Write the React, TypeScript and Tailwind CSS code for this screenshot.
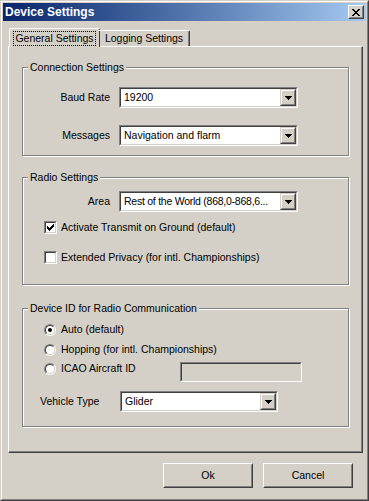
import React from 'react';

const Arrow = () => (
    <svg width="7" height="4" viewBox="0 0 7 4" shapeRendering="crispEdges">
        <path d="M0 0h7v1H0zM1 1h5v1H1zM2 2h3v1H2zM3 3h1v1H3z" fill="#000" />
    </svg>
);

const DropButton = () => (
    <div className="w-[16px] h-full border border-t-[#D4D0C8] border-l-[#D4D0C8] border-r-[#404040] border-b-[#404040] bg-[#D4D0C8]">
        <div className="h-full flex items-center justify-center border border-t-white border-l-white border-r-[#808080] border-b-[#808080]">
            <Arrow />
        </div>
    </div>
);

const Combo = ({ value, width, tight }: { value: string; width: string; tight?: boolean }) => (
    <div className={`${width} h-[21px] border border-t-[#808080] border-l-[#808080] border-r-white border-b-white`}>
        <div className="h-full flex bg-white border border-t-[#404040] border-l-[#404040] border-r-[#D4D0C8] border-b-[#D4D0C8]">
            <div className={`flex-1 min-w-0 pl-[3px] leading-[17px] whitespace-nowrap ${tight ? 'tracking-[-0.25px]' : ''}`}>{value}</div>
            <DropButton />
        </div>
    </div>
);

const CheckBox = ({ checked, label }: { checked?: boolean; label: string }) => (
    <div className="flex items-center h-[13px]">
        <div className="w-[13px] h-[13px] border border-t-[#808080] border-l-[#808080] border-r-white border-b-white">
            <div className="w-full h-full flex items-center justify-center bg-white border border-t-[#404040] border-l-[#404040] border-r-[#D4D0C8] border-b-[#D4D0C8]">
                {checked && (
                    <svg width="7" height="7" viewBox="0 0 7 7" shapeRendering="crispEdges">
                        <path d="M6 0h1v1H6zM5 1h2v1H5zM0 2h1v1H0zM4 2h3v1H4zM0 3h2v1H0zM3 3h3v1H3zM0 4h5v1H0zM1 5h3v1H1zM2 6h1v1H2z" fill="#000" />
                    </svg>
                )}
            </div>
        </div>
        <span className="ml-[4px] leading-[13px] whitespace-nowrap">{label}</span>
    </div>
);

const Radio = ({ checked, label }: { checked?: boolean; label: string }) => (
    <div className="flex items-center h-[13px]">
        <div className="w-[12px] h-[12px] rounded-full border border-t-[#808080] border-l-[#808080] border-r-white border-b-white">
            <div className="w-full h-full rounded-full flex items-center justify-center bg-white border border-t-[#404040] border-l-[#404040] border-r-[#D4D0C8] border-b-[#D4D0C8]">
                {checked && <div className="w-[4px] h-[4px] rounded-full bg-black" />}
            </div>
        </div>
        <span className="ml-[5px] leading-[13px] whitespace-nowrap">{label}</span>
    </div>
);

const Group = ({ title, className, children }: { title: string; className: string; children: React.ReactNode }) => (
    <div className={`relative border border-[#808080] shadow-[1px_1px_0_#fff,inset_1px_1px_0_#fff] ${className}`}>
        <span className="absolute top-[-7px] left-[5px] px-[2px] leading-[13px] bg-[#D4D0C8] whitespace-nowrap">{title}</span>
        {children}
    </div>
);

const Button = ({ label }: { label: string }) => (
    <div className="w-[90px] h-[25px] border border-t-white border-l-white border-r-[#404040] border-b-[#404040]">
        <div className="h-full flex items-center justify-center border border-t-[#D4D0C8] border-l-[#D4D0C8] border-r-[#808080] border-b-[#808080]">
            {label}
        </div>
    </div>
);

export default function App() {
    return (
        <div className="w-[369px] h-[501px] bg-[#D4D0C8] border border-t-[#D4D0C8] border-l-[#D4D0C8] border-r-[#404040] border-b-[#404040] font-['Liberation_Sans',Arial,sans-serif] text-[10.5px] text-black">
            <div className="h-full border border-t-white border-l-white border-r-[#808080] border-b-[#808080] p-px">
                {/* title bar */}
                <div className="h-[18px] flex items-center justify-between pl-[2px] pr-[2px] bg-gradient-to-r from-[#0A246A] to-[#A6CAF0]">
                    <span className="text-white font-bold text-[12px] leading-[14px]">Device Settings</span>
                    <div className="w-[16px] h-[14px] border border-t-white border-l-white border-r-[#404040] border-b-[#404040] bg-[#D4D0C8]">
                        <div className="h-full flex items-center justify-center border border-t-[#D4D0C8] border-l-[#D4D0C8] border-r-[#808080] border-b-[#808080]">
                            <svg width="8" height="7" viewBox="0 0 8 7" shapeRendering="crispEdges">
                                <path d="M0 0h2v1H0zM6 0h2v1H6zM1 1h2v1H1zM5 1h2v1H5zM2 2h4v1H2zM3 3h2v1H3zM2 4h4v1H2zM1 5h2v1H1zM5 5h2v1H5zM0 6h2v1H0zM6 6h2v1H6z" fill="#000" />
                            </svg>
                        </div>
                    </div>
                </div>

                {/* tabs */}
                <div className="flex items-end mt-[7px] ml-[6px] relative z-10 -mb-px">
                    <div className="w-[91px] h-[19px] bg-[#D4D0C8] border-t border-l border-r border-t-white border-l-white border-r-[#404040] rounded-tl-[2px] rounded-tr-[2px] flex items-center justify-center">
                        <span className="outline outline-1 outline-dotted outline-black leading-[13px] px-px">General Settings</span>
                    </div>
                    <div className="w-[91px] h-[16px] mb-px -ml-px border-t border-r border-t-white border-r-[#404040] shadow-[inset_-1px_0_0_#808080] rounded-tr-[2px] flex items-center justify-center">
                        <span className="leading-[13px]">Logging Settings</span>
                    </div>
                </div>

                {/* panel */}
                <div className="ml-[5px] w-[355px] h-[407px] border border-t-white border-l-white border-r-[#404040] border-b-[#404040] shadow-[inset_-1px_-1px_0_#808080]">
                    <Group title="Connection Settings" className="ml-[13px] mt-[20px] w-[327px] h-[89px]">
                        <div className="flex items-center mt-[19px]">
                            <span className="w-[87px] text-right">Baud Rate</span>
                            <div className="ml-[9px]"><Combo value="19200" width="w-[179px]" /></div>
                        </div>
                        <div className="flex items-center mt-[17px]">
                            <span className="w-[87px] text-right">Messages</span>
                            <div className="ml-[9px]"><Combo value="Navigation and flarm" width="w-[179px]" /></div>
                        </div>
                    </Group>

                    <Group title="Radio Settings" className="ml-[13px] mt-[21px] w-[327px] h-[108px]">
                        <div className="flex items-center mt-[13px]">
                            <span className="w-[87px] text-right">Area</span>
                            <div className="ml-[9px]"><Combo value="Rest of the World (868,0-868,6..." width="w-[179px]" tight /></div>
                        </div>
                        <div className="ml-[21px] mt-[9px]">
                            <CheckBox checked label="Activate Transmit on Ground (default)" />
                        </div>
                        <div className="ml-[21px] mt-[17px]">
                            <CheckBox label="Extended Privacy (for intl. Championships)" />
                        </div>
                    </Group>

                    <Group title="Device ID for Radio Communication" className="ml-[13px] mt-[23px] w-[327px] h-[119px]">
                        <div className="ml-[21px] mt-[14px]">
                            <Radio checked label="Auto (default)" />
                        </div>
                        <div className="ml-[21px] mt-[7px]">
                            <Radio label="Hopping (for intl. Championships)" />
                        </div>
                        <div className="flex items-start ml-[21px] mt-[6px]">
                            <div className="w-[136px]">
                                <Radio label="ICAO Aircraft ID" />
                            </div>
                            <div className="w-[122px] h-[20px] border border-t-[#808080] border-l-[#808080] border-r-white border-b-white">
                                <div className="h-full border border-t-[#404040] border-l-[#404040] border-r-[#D4D0C8] border-b-[#D4D0C8] bg-[#D4D0C8]" />
                            </div>
                        </div>
                        <div className="flex items-center ml-[17px] mt-[9px]">
                            <span className="w-[80px]">Vehicle Type</span>
                            <Combo value="Glider" width="w-[158px]" />
                        </div>
                    </Group>
                </div>

                {/* buttons */}
                <div className="flex mt-[10px] ml-[160px] gap-[10px]">
                    <Button label="Ok" />
                    <Button label="Cancel" />
                </div>
            </div>
        </div>
    );
}
